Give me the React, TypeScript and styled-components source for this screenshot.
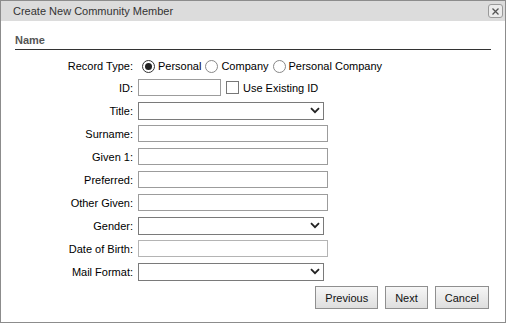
import React from "react";
import styled, { createGlobalStyle } from "styled-components";

const Global = createGlobalStyle`
  html, body { margin: 0; padding: 0; background: #fff; }
  * { box-sizing: border-box; }
`;

const Window = styled.div`
  width: 506px;
  height: 323px;
  border: 1px solid #8c8c8c;
  background: #fff;
  display: flex;
  flex-direction: column;
  font-family: "Liberation Sans", Arial, sans-serif;
  font-size: 11px;
  color: #000;
`;

const TitleBar = styled.div`
  height: 20px;
  background: #dcdcdc;
  display: flex;
  align-items: center;
  justify-content: space-between;
  padding: 0 2px 0 12px;
  color: #333;
`;

const CloseButton = styled.div`
  width: 15px;
  height: 14px;
  border: 1px solid #9a9a9a;
  border-radius: 3px;
  background: #ececec;
  display: flex;
  align-items: center;
  justify-content: center;
`;

const Body = styled.div`
  padding: 0 14px;
  display: flex;
  flex-direction: column;
`;

const SectionHeader = styled.div`
  font-weight: bold;
  color: #555;
  padding-top: 12px;
  line-height: 14px;
  padding-bottom: 2px;
  border-bottom: 1px solid #333;
`;

const Form = styled.div`
  display: grid;
  grid-template-columns: 118px 1fr;
  grid-template-rows: 20px repeat(9, 23px);
  column-gap: 5px;
  margin-top: 6px;
`;

const Label = styled.div`
  display: flex;
  align-items: center;
  justify-content: flex-end;
  white-space: nowrap;
`;

const Field = styled.div`
  display: flex;
  align-items: center;
`;

const TextInput = styled.div<{ $w?: number; $light?: boolean }>`
  width: ${(p) => p.$w ?? 190}px;
  height: 17px;
  border: 1px solid ${(p) => (p.$light ? "#b4b4b4" : "#9c9c9c")};
  background: #fff;
`;

const Select = styled.div`
  width: 186px;
  height: 18px;
  border: 1px solid #7a7a7a;
  background: #fff;
  display: flex;
  align-items: center;
  justify-content: flex-end;
  padding-right: 3px;
`;

const RadioGroup = styled.div`
  display: flex;
  align-items: center;
`;

const RadioOption = styled.div`
  display: flex;
  align-items: center;
`;

const RadioCircle = styled.span<{ $checked?: boolean }>`
  width: 13px;
  height: 13px;
  border-radius: 50%;
  border: 1px solid ${(p) => (p.$checked ? "#333" : "#888")};
  background: #fff;
  margin: 0 3px 0 4px;
  display: flex;
  align-items: center;
  justify-content: center;
  &::after {
    content: "";
    display: ${(p) => (p.$checked ? "block" : "none")};
    width: 7px;
    height: 7px;
    border-radius: 50%;
    background: #222;
  }
`;

const CheckBox = styled.span`
  width: 13px;
  height: 13px;
  border: 1px solid #777;
  background: #fff;
  margin: 0 4px 0 5px;
`;

const ButtonRow = styled.div`
  display: flex;
  justify-content: flex-end;
  gap: 7px;
  margin-top: 3px;
  padding-right: 2px;
`;

const Button = styled.div`
  height: 23px;
  padding: 0 9px;
  border: 1px solid #8f8f8f;
  background: linear-gradient(#f6f6f6, #dedede);
  display: flex;
  align-items: center;
  color: #111;
`;

const Chevron = () => (
  <svg width="10" height="7" viewBox="0 0 10 7">
    <path d="M1 1.2 L5 5.2 L9 1.2" fill="none" stroke="#222" strokeWidth="1.8" />
  </svg>
);

const CloseIcon = () => (
  <svg width="9" height="9" viewBox="0 0 9 9">
    <path d="M1.5 1.5 L7.5 7.5 M7.5 1.5 L1.5 7.5" stroke="#555" strokeWidth="1.3" />
  </svg>
);

const rows: { label: string; kind: "text" | "select" | "date" }[] = [
  { label: "Title:", kind: "select" },
  { label: "Surname:", kind: "text" },
  { label: "Given 1:", kind: "text" },
  { label: "Preferred:", kind: "text" },
  { label: "Other Given:", kind: "text" },
  { label: "Gender:", kind: "select" },
  { label: "Date of Birth:", kind: "date" },
  { label: "Mail Format:", kind: "select" },
];

export default function App() {
  return (
    <>
      <Global />
      <Window>
        <TitleBar>
          <span>Create New Community Member</span>
          <CloseButton>
            <CloseIcon />
          </CloseButton>
        </TitleBar>
        <Body>
          <SectionHeader>Name</SectionHeader>
          <Form>
            <Label>Record Type:</Label>
            <Field>
              <RadioGroup>
                <RadioOption>
                  <RadioCircle $checked />
                  Personal
                </RadioOption>
                <RadioOption>
                  <RadioCircle />
                  Company
                </RadioOption>
                <RadioOption>
                  <RadioCircle />
                  Personal Company
                </RadioOption>
              </RadioGroup>
            </Field>
            <Label>ID:</Label>
            <Field>
              <TextInput $w={83} />
              <CheckBox />
              Use Existing ID
            </Field>
            {rows.map((r) => (
              <React.Fragment key={r.label}>
                <Label>{r.label}</Label>
                <Field>
                  {r.kind === "select" ? (
                    <Select>
                      <Chevron />
                    </Select>
                  ) : (
                    <TextInput $light={r.kind === "date"} />
                  )}
                </Field>
              </React.Fragment>
            ))}
          </Form>
          <ButtonRow>
            <Button>Previous</Button>
            <Button>Next</Button>
            <Button>Cancel</Button>
          </ButtonRow>
        </Body>
      </Window>
    </>
  );
}
